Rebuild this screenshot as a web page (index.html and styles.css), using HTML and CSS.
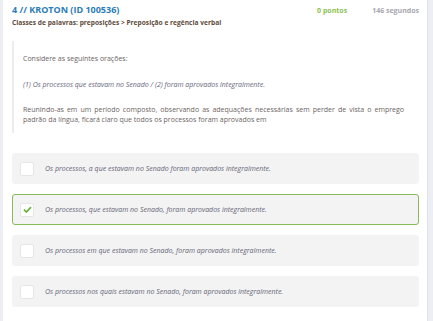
FILE: index.html
```html
<!DOCTYPE html>
<html lang="pt">
<head>
    <meta charset="UTF-8">
    <meta name="viewport" content="width=device-width, initial-scale=1.0">
    <title>Questão 4 // KROTON</title>
    <link rel="stylesheet" href="styles.css">
</head>
<body>

    <div class="panel">
        <!-- Cabeçalho da questão -->
        <div class="question-head">
            <div>
                <h1>4 // KROTON (ID 100536)</h1>
                <div class="topic">Classes de palavras: preposições &gt; Preposição e regência verbal</div>
            </div>
            <div class="stats">
                <span class="points">0 pontos</span>
                <span class="time">146 segundos</span>
            </div>
        </div>

        <!-- Enunciado -->
        <blockquote class="statement">
            <p>Considere as seguintes orações:</p>
            <p><em>(1) Os processos que estavam no Senado / (2) foram aprovados integralmente.</em></p>
            <p>Reunindo-as em um período composto, observando as adequações necessárias sem perder de vista o emprego padrão da língua, ficará claro que todos os processos foram aprovados em</p>
        </blockquote>

        <!-- Alternativas -->
        <div class="options">
            <div class="option">
                <span class="check"></span>
                <span class="option-text">Os processos, a que estavam no Senado foram aprovados integralmente.</span>
            </div>
            <div class="option selected">
                <span class="check">
                    <svg width="9" height="7" viewBox="0 0 9 7"><path d="M1 3.6 L3.4 6 L8 1.2" fill="none" stroke="#6fb33e" stroke-width="1.8"/></svg>
                </span>
                <span class="option-text">Os processos, que estavam no Senado, foram aprovados integralmente.</span>
            </div>
            <div class="option">
                <span class="check"></span>
                <span class="option-text">Os processos em que estavam no Senado, foram aprovados integralmente.</span>
            </div>
            <div class="option">
                <span class="check"></span>
                <span class="option-text">Os processos nos quais estavam no Senado, foram aprovados integralmente.</span>
            </div>
        </div>
    </div>

</body>
</html>
```

FILE: styles.css
```css
body {
    font-family: "Open Sans", Arial, sans-serif;
    margin: 0;
    background-color: #eceef4;
}

.panel {
    margin-left: 3px;
    width: 425px;
    min-height: 100vh;
    box-sizing: border-box;
    background-color: #ffffff;
    border-right: 1px solid #dfe2ea;
    padding: 4px 8px 10px 9px;
}

.question-head {
    display: flex;
    justify-content: space-between;
    align-items: flex-start;
}

h1 {
    margin: 0;
    font-size: 9px;
    line-height: 12px;
    font-weight: 700;
    color: #2d7cb8;
}

.topic {
    margin-top: 2px;
    font-size: 6.65px;
    line-height: 10px;
    font-weight: 700;
    color: #5e4c3c;
}

.stats {
    display: flex;
    gap: 25px;
    font-size: 7px;
    font-weight: 700;
    padding-top: 2px;
}

.points {
    color: #8dc153;
}

.time {
    color: #a7a7b0;
}

.statement {
    margin: 13px 0 0 0;
    border-left: 2px solid #ececec;
    padding: 13px 15px 9px 9px;
    font-size: 7px;
    line-height: 9.5px;
    color: #6c6464;
}

.statement p {
    margin: 0 0 16px 0;
    text-align: justify;
}

.statement p:last-child {
    margin-bottom: 0;
}

.statement em {
    color: #676780;
}

.options {
    margin-top: 20px;
    display: flex;
    flex-direction: column;
    gap: 10px;
}

.option {
    display: flex;
    align-items: center;
    height: 31px;
    box-sizing: border-box;
    padding: 0 7px;
    background-color: #f3f3f3;
    border: 1px solid #f3f3f3;
    border-radius: 3px;
}

.option.selected {
    border-color: #86bc55;
}

.check {
    width: 14px;
    height: 14px;
    box-sizing: border-box;
    background-color: #ffffff;
    border: 1px solid #e6e6e6;
    border-radius: 2px;
    display: flex;
    align-items: center;
    justify-content: center;
    flex-shrink: 0;
}

.option-text {
    margin-left: 11px;
    font-size: 7px;
    font-style: italic;
    color: #666678;
}
```
